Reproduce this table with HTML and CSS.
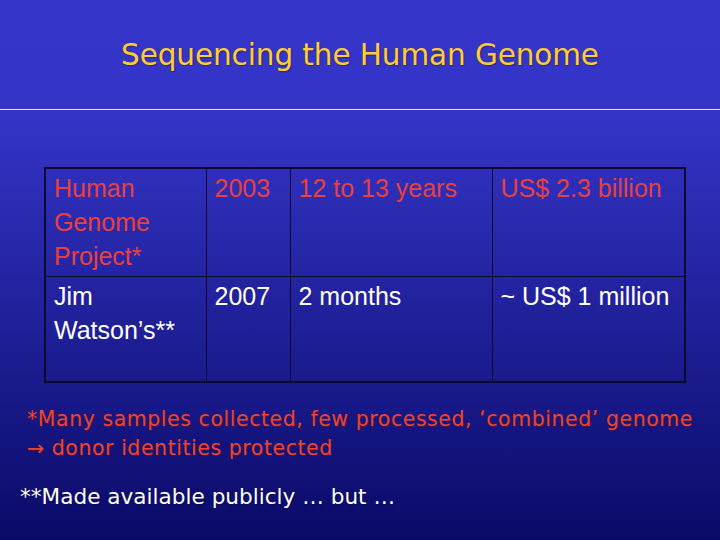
FILE: index.html
```html
<!DOCTYPE html>
<html>
<head>
<meta charset="utf-8">
<link rel="stylesheet" href="styles.css">
</head>
<body>
<div class="slide">
  <header class="head">
    <h1 class="title">Sequencing the Human Genome</h1>
  </header>
  <div class="rule"></div>
  <table class="grid">
    <colgroup>
      <col class="c1"><col class="c2"><col class="c3"><col class="c4">
    </colgroup>
    <tr class="r1 red">
      <td>Human<br>Genome<br>Project*</td>
      <td>2003</td>
      <td>12 to 13 years</td>
      <td>US$ 2.3 billion</td>
    </tr>
    <tr class="r2 white">
      <td>Jim<br>Watson’s**</td>
      <td>2007</td>
      <td>2 months</td>
      <td>~ US$ 1 million</td>
    </tr>
  </table>
  <div class="notes">
    <p class="note red-note">*Many samples collected, few processed, ‘combined’ genome<br>→ donor identities protected</p>
    <p class="note white-note">**Made available publicly … but …</p>
  </div>
</div>
</body>
</html>
```
FILE: styles.css
```css
html, body {
  margin: 0;
  padding: 0;
}
body {
  width: 720px;
  height: 540px;
  overflow: hidden;
}
.slide {
  width: 720px;
  height: 540px;
  background: linear-gradient(to bottom, #3535c9 0px, #3434c7 115px, #0a0a68 540px);
  display: flex;
  flex-direction: column;
}
.head {
  height: 109px;
  display: flex;
  justify-content: center;
}
.title {
  margin: 0;
  padding-top: 37px;
  font-family: "Comic Sans MS", "DejaVu Sans", sans-serif;
  font-weight: normal;
  font-size: 29.5px;
  line-height: 36px;
  color: #ffcc33;
  text-shadow: 1px 1px 1px rgba(40, 30, 90, 0.6);
  letter-spacing: -0.1px;
}
.rule {
  height: 1px;
  background: #e8e8f4;
}
.grid {
  margin: 57px 0 0 44px;
  width: 642px;
  border-collapse: collapse;
  border: 2px solid #0b0b30;
  table-layout: fixed;
  font-family: "Liberation Sans", Arial, sans-serif;
  font-size: 25px;
  line-height: 34px;
}
.c1 { width: 161px; }
.c2 { width: 84px; }
.c3 { width: 202px; }
.c4 { width: 193px; }
.grid td {
  border: 1px solid #0b0b30;
  vertical-align: top;
  padding: 2px 7px 0 8px;
}
.r1 { height: 108px; }
.r2 { height: 106px; }
.red td { color: #e8403c; }
.white td { color: #ffffff; }
.notes {
  padding-top: 22px;
}
.note {
  margin: 0;
  font-family: "Comic Sans MS", "DejaVu Sans", sans-serif;
}
.red-note {
  margin-left: 27px;
  font-size: 20.5px;
  line-height: 29px;
  letter-spacing: 0.55px;
  color: #ea4438;
  text-shadow: 1px 1px 1px #4a1840;
}
.white-note {
  margin-left: 20px;
  margin-top: 19px;
  font-size: 21.6px;
  line-height: 30px;
  color: #ffffff;
  text-shadow: 1px 1px 1px rgba(10, 10, 60, 0.6);
}
```
